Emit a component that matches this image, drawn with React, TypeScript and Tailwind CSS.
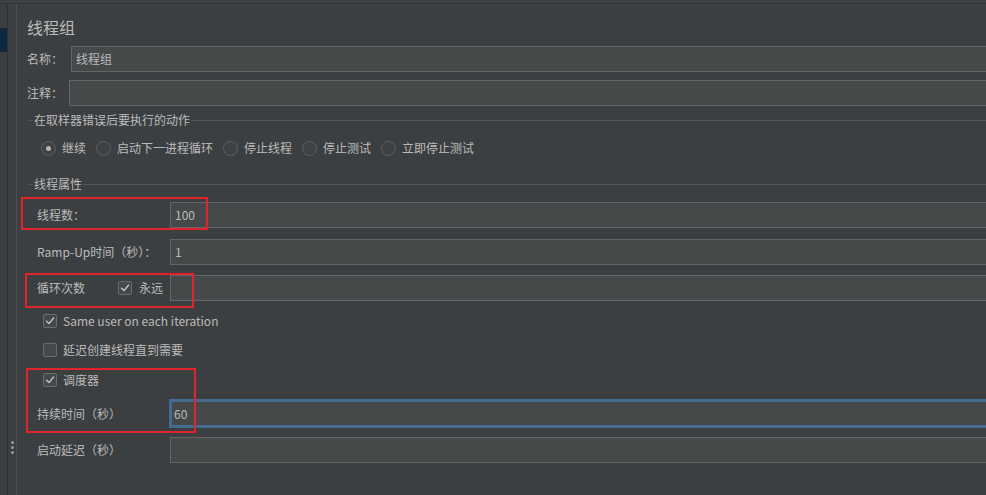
import React from "react";

const cjk = "font-['Noto_Sans_CJK_SC','Noto_Sans',sans-serif]";

function Radio({ checked, label }: { checked?: boolean; label: string }) {
  return (
    <div className="flex items-center">
      <span className="flex h-[15px] w-[15px] items-center justify-center rounded-full border border-[#5e6162] bg-[#3f4244]">
        {checked && <span className="h-[5px] w-[5px] rounded-full bg-[#b5b5b5]" />}
      </span>
      <span className="ml-[6px] text-[12px] leading-[16px] text-[#bbbbbb]">{label}</span>
    </div>
  );
}

function Check({ checked }: { checked?: boolean }) {
  return (
    <span className="flex h-[14px] w-[14px] shrink-0 items-center justify-center rounded-[2px] border border-[#6b6b6b] bg-[#43494a]">
      {checked && (
        <svg width="10" height="10" viewBox="0 0 10 10" fill="none">
          <path d="M1.5 5.2 L4 7.6 L8.6 2" stroke="#c4c4c4" strokeWidth="1.4" strokeLinecap="round" strokeLinejoin="round" />
        </svg>
      )}
    </span>
  );
}

function Field({ value, focused, h = "h-[26px]" }: { value?: string; focused?: boolean; h?: string }) {
  return (
    <div
      className={
        focused
          ? `flex ${h} flex-1 items-center border-y-[3px] border-l-[3px] border-[#466b91] bg-[#45494a] pl-[2px] text-[12px] text-[#bbbbbb]`
          : `flex ${h} flex-1 items-center border-y border-l border-[#646464] bg-[#45494a] pl-[4px] text-[12px] text-[#bbbbbb]`
      }
    >
      {value}
    </div>
  );
}

function Group({ title }: { title: string }) {
  return (
    <div className="ml-[2px] flex h-[16px] items-center">
      <div className="h-px w-[4px] bg-[#545658]" />
      <span className="px-[1px] text-[12px] leading-[16px] text-[#bbbbbb]">{title}</span>
      <div className="h-px flex-1 bg-[#545658]" />
    </div>
  );
}

export default function App() {
  return (
    <div className={`relative flex h-[495px] w-[986px] flex-col overflow-hidden bg-[#3c3f41] ${cjk}`}>
      <div className="h-[4px] shrink-0 border-b border-[#313335] bg-[#3e4143]" />
      <div className="flex flex-1">
        {/* left rail */}
        <div className="flex w-[7px] flex-col">
          <div className="mt-[24px] h-[24px] bg-[#0d293e]" />
        </div>
        <div className="w-px bg-[#2f3133]" />
        <div className="flex w-[8px] flex-col items-center">
          <div className="mt-[437px] flex flex-col gap-[2px]">
            <span className="h-[3px] w-[3px] rounded-full bg-[#9a9a9a]" />
            <span className="h-[3px] w-[3px] rounded-full bg-[#9a9a9a]" />
            <span className="h-[3px] w-[3px] rounded-full bg-[#9a9a9a]" />
          </div>
        </div>
        <div className="w-px bg-[#4e5153]" />

        {/* main */}
        <div className="flex flex-1 flex-col pl-[10px] text-[#bbbbbb]">
          <div className="mt-[13px] h-[20px] text-[16px] leading-[20px]">线程组</div>

          <div className="mt-[9px] flex items-center">
            <span className="w-[44px] text-[12px]">名称：</span>
            <Field value="线程组" />
          </div>
          <div className="mt-[8px] flex items-center">
            <span className="w-[42px] text-[12px]">注释：</span>
            <Field />
          </div>

          <div className="mt-[6px]">
            <Group title="在取样器错误后要执行的动作" />
          </div>
          <div className="ml-[14px] mt-[12px] flex h-[16px] items-center gap-[10px]">
            <Radio checked label="继续" />
            <Radio label="启动下一进程循环" />
            <Radio label="停止线程" />
            <Radio label="停止测试" />
            <Radio label="立即停止测试" />
          </div>

          <div className="mt-[20px]">
            <Group title="线程属性" />
          </div>

          <div className="mt-[10px] flex items-center pl-[10px]">
            <span className="w-[133px] text-[12px]">线程数：</span>
            <Field value="100" />
          </div>
          <div className="mt-[11px] flex items-center pl-[10px]">
            <span className="w-[133px] text-[12px]">Ramp-Up时间（秒）：</span>
            <Field value="1" />
          </div>
          <div className="mt-[10px] flex items-center pl-[10px]">
            <span className="w-[81px] text-[12px]">循环次数</span>
            <Check checked />
            <span className="ml-[7px] w-[31px] text-[12px]">永远</span>
            <Field />
          </div>

          <div className="ml-[16px] mt-[13px] flex h-[14px] items-center">
            <Check checked />
            <span className="ml-[6px] text-[12px]">Same user on each iteration</span>
          </div>
          <div className="ml-[16px] mt-[15px] flex h-[14px] items-center">
            <Check />
            <span className="ml-[6px] text-[12px]">延迟创建线程直到需要</span>
          </div>
          <div className="ml-[16px] mt-[16px] flex h-[14px] items-center">
            <Check checked />
            <span className="ml-[6px] text-[12px]">调度器</span>
          </div>

          <div className="mt-[12px] flex items-center pl-[10px]">
            <span className="w-[132px] text-[12px]">持续时间（秒）</span>
            <Field value="60" focused h="h-[29px]" />
          </div>
          <div className="mt-[9px] flex items-center pl-[10px]">
            <span className="w-[133px] text-[12px]">启动延迟（秒）</span>
            <Field />
          </div>
        </div>
      </div>

      {/* red annotation boxes */}
      <div className="absolute left-[21px] top-[197px] h-[33px] w-[187px] border-2 border-[#e3232c]" />
      <div className="absolute left-[25px] top-[273px] h-[35px] w-[169px] border-2 border-[#e3232c]" />
      <div className="absolute left-[26px] top-[368px] h-[65px] w-[170px] border-2 border-[#e3232c]" />
    </div>
  );
}
